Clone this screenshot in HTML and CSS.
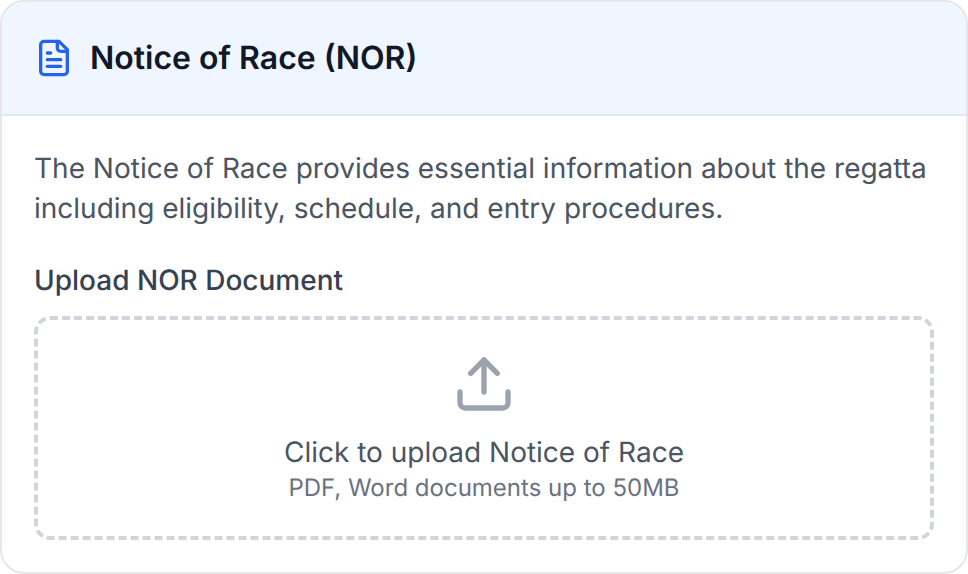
FILE: index.html
```html
<!DOCTYPE html>
<html lang="en">
<head>
<meta charset="utf-8">
<title>Notice of Race</title>
<link rel="stylesheet" href="styles.css">
</head>
<body>
<section class="card">
  <header class="card-header">
    <svg class="doc-icon" viewBox="0 0 24 24" fill="none" stroke="currentColor" stroke-width="2" stroke-linecap="round" stroke-linejoin="round">
      <path d="M15 2H6a2 2 0 0 0-2 2v16a2 2 0 0 0 2 2h12a2 2 0 0 0 2-2V7Z"/>
      <path d="M14 2v4a2 2 0 0 0 2 2h4"/>
      <path d="M10 9H8"/>
      <path d="M16 13H8"/>
      <path d="M16 17H8"/>
    </svg>
    <h2 class="card-title">Notice of Race (NOR)</h2>
  </header>
  <div class="card-body">
    <p class="intro">The Notice of Race provides essential information about the regatta including eligibility, schedule, and entry procedures.</p>
    <div class="field-label">Upload NOR Document</div>
    <div class="dropzone">
      <svg class="upload-icon" viewBox="0 0 24 24" fill="none" stroke="currentColor" stroke-width="2" stroke-linecap="round" stroke-linejoin="round">
        <path d="M21 15v4a2 2 0 0 1-2 2H5a2 2 0 0 1-2-2v-4"/>
        <path d="M17 8l-5-5-5 5"/>
        <path d="M12 3v12"/>
      </svg>
      <div class="drop-title">Click to upload Notice of Race</div>
      <div class="drop-hint">PDF, Word documents up to 50MB</div>
    </div>
  </div>
</section>
</body>
</html>
```
FILE: styles.css
```css
* { box-sizing: border-box; }
html, body { margin: 0; padding: 0; background: #fff; }
body { font-family: Inter, "Liberation Sans", sans-serif; text-rendering: geometricPrecision; }
.card {
  width: 968px;
  height: 574px;
  border: 2px solid #e5e7eb;
  border-radius: 24px;
  overflow: hidden;
  background: #fff;
}
.card-header {
  display: flex;
  align-items: center;
  gap: 16px;
  height: 114px;
  padding: 0 32px;
  background: #eff6ff;
  border-bottom: 2px solid #e5e7eb;
}
.doc-icon { width: 40px; height: 40px; color: #2563eb; flex: none; }
.card-title { margin: 0; font-size: 32px; line-height: 40px; font-weight: 600; color: #111827; }
.card-body { padding: 32px; }
.intro { margin: 0 0 32px; font-size: 28px; line-height: 40px; color: #4b5563; }
.field-label { font-size: 28px; line-height: 40px; font-weight: 500; color: #374151; margin-bottom: 16px; }
.dropzone {
  display: flex;
  flex-direction: column;
  align-items: center;
  padding: 32px;
  border: 4px dashed #d1d5db;
  border-radius: 16px;
}
.upload-icon { width: 64px; height: 64px; color: #9ca3af; margin-bottom: 16px; }
.drop-title { font-size: 28px; line-height: 40px; color: #4b5563; }
.drop-hint { font-size: 24px; line-height: 32px; color: #6b7280; }
```
